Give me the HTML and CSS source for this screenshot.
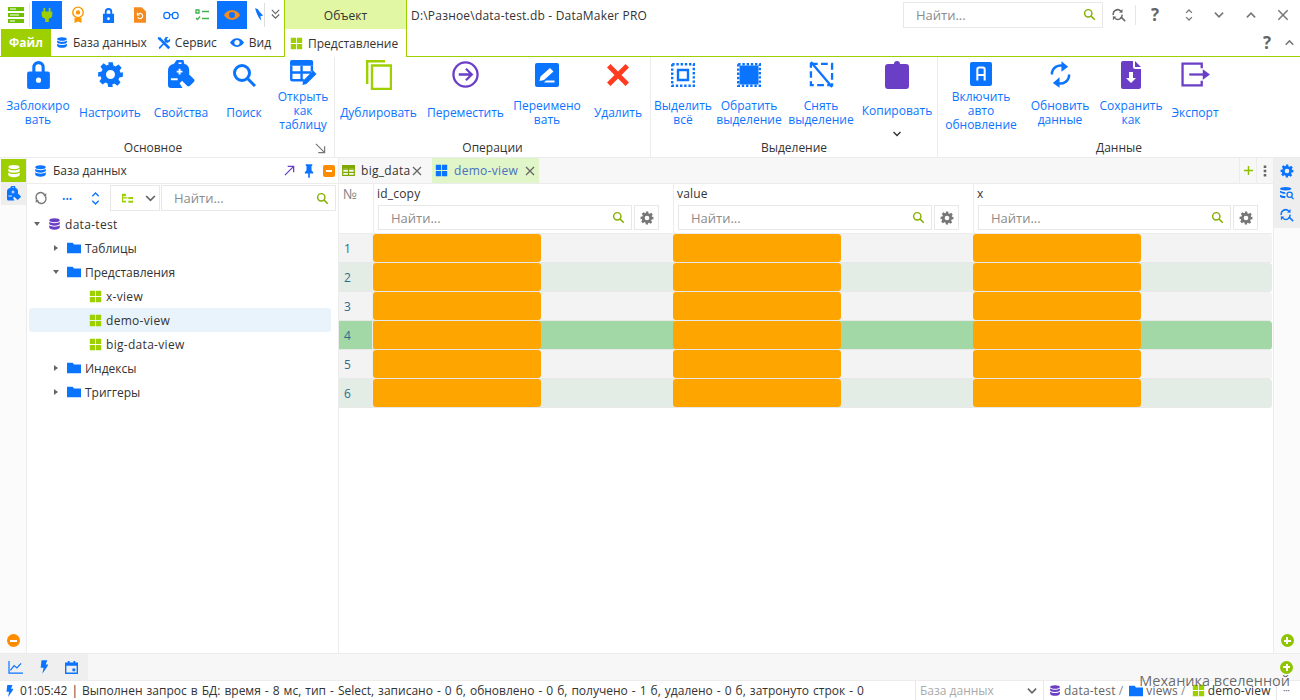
FILE: index.html
```html
<!DOCTYPE html>
<html lang="ru">
<head>
  <meta charset="UTF-8">
  <title>DataMaker PRO</title>
  <link rel="stylesheet" href="styles.css">
</head>
<body>
  <svg class="defs" width="0" height="0">
    <defs>
      <symbol id="db" viewBox="0 0 16 16"><path d="M8 1c3.600 0 6.500 1 6.500 2.400S11.600 5.800 8 5.800 1.500 4.800 1.500 3.400 4.400 1 8 1zM1.500 5.300C3 6.600 5.500 7 8 7s5-.4 6.500-1.700v2.400C14.500 9 11.600 10 8 10S1.500 9 1.500 7.700zM1.500 9.600C3 10.900 5.500 11.300 8 11.300s5-.4 6.500-1.700v2.600C14.500 13.700 11.600 15 8 15s-6.500-1.300-6.500-2.800z"/></symbol>
      <symbol id="grid4" viewBox="0 0 16 16"><path d="M1 1h6.500v6.500H1zM8.500 1H15v6.500H8.500zM1 8.500h6.500V15H1zM8.500 8.500H15V15H8.500z"/></symbol>
      <symbol id="folder" viewBox="0 0 16 16"><path d="M0 2h6.500L8 4h8v10H0z"/></symbol>
      <symbol id="find" viewBox="0 0 16 16"><circle cx="6.500" cy="6.500" r="4.500" fill="none" stroke="currentColor" stroke-width="1.800"/><path d="M10 10l4.500 4.500" stroke="currentColor" stroke-width="1.800" fill="none"/></symbol>
      <symbol id="gear" viewBox="0 0 24 24"><path fill-rule="evenodd" d="M10 1h4l.6 3.100 1.900.8 2.600-1.800 2.800 2.800-1.800 2.600.8 1.900L23 10v4l-3.100.6-.8 1.900 1.800 2.600-2.800 2.800-2.600-1.800-1.900.8L14 23h-4l-.6-3.100-1.900-.8-2.600 1.800-2.800-2.800 1.800-2.600-.8-1.900L1 14v-4l3.100-.6.800-1.900-1.800-2.600 2.800-2.800 2.600 1.800 1.900-.8zM12 8a4 4 0 1 0 0 8 4 4 0 0 0 0-8z"/></symbol>
      <symbol id="refresh" viewBox="0 0 16 16"><path d="M3 9.500A5.200 5.200 0 0 1 12 4.300M13 6.500A5.200 5.200 0 0 1 4 11.700" fill="none" stroke="currentColor" stroke-width="1.700"/><path d="M10.500 5.800L14 6.500V2.300zM5.500 10.200L2 9.500v4.200z"/></symbol>
      <symbol id="refind" viewBox="0 0 16 16"><path d="M1.500 8A5 5 0 0 1 10 3.500M11.500 7.500A5 5 0 0 1 3.500 12" fill="none" stroke="currentColor" stroke-width="1.700"/><path d="M8 5l4 .5V1zM5 10l-4-.5V14z"/><path d="M10 10l5 5" stroke="currentColor" stroke-width="1.700"/></symbol>
      <symbol id="updown" viewBox="0 0 12 16"><path d="M2.500 5.500L6 2l3.500 3.500M2.500 10.500L6 14l3.500-3.500" fill="none" stroke="currentColor" stroke-width="1.500"/></symbol>
      <symbol id="bolt" viewBox="0 0 12 16"><path d="M3 0h7L8 5h3l-1 2.500L4 16l1.500-7H2z"/></symbol>
      <symbol id="arrowdown" viewBox="0 0 12 12"><path d="M2.500 4l3.500 3.500L9.500 4" fill="none" stroke="currentColor" stroke-width="1.400"/></symbol>
      <symbol id="arrowup" viewBox="0 0 12 12"><path d="M2.500 8L6 4.500 9.500 8" fill="none" stroke="currentColor" stroke-width="1.400"/></symbol>
      <symbol id="cross" viewBox="0 0 12 12"><path d="M2 2l8 8M10 2l-8 8" fill="none" stroke="currentColor" stroke-width="1.300"/></symbol>
      <symbol id="tree" viewBox="0 0 16 14"><path d="M1 1h5v3H1zM1 4h1.500v6H6v2H1zM9 5h6v2.500H9zM9 10h6v2.500H9zM2.500 5.500H8V7H2.500z"/></symbol>
      <symbol id="bag" viewBox="0 0 28 30"><path d="M9 0h7l1 4c3.500.6 5 3.500 5 7v3.500L12 24l3 5H3a3 3 0 0 1-3-3V11c0-3.500 2-6.400 6-7zm2 2.500V4h3V2.500zM11 9v2H9v2h2v2h2v-2h2v-2h-2V9zM3 19v2h7v-2z"/><path d="M17 15l4-1 6 6a2 2 0 0 1 0 2.500l-4.500 4.500a2 2 0 0 1-2.500 0l-6-6 1-4z"/></symbol>
    </defs>
  </svg>

  <div class="app">
    <header class="top">
      <div class="top-left">
        <div class="qat">
          <svg class="qat-menu" viewBox="0 0 18 18" width="22" height="18"><path fill="#6fc000" d="M1 1h16v4H1zM1 7h16v4H1zM1 13h16v4H1z"/><path fill="#fff" d="M3 2.500h6v1H3zM3 8.500h9v1H3zM3 14.500h5v1H3z"/></svg>
          <span class="qat-sep"></span>
          <div class="qat-btn on"><svg viewBox="0 0 16 18" width="14" height="18"><path fill="#9ecf00" d="M4 1h2v4h4V1h2v4h2v4c0 2.500-2 4-4 4.300V17H6v-3.700C4 13 2 11.500 2 9V5h2z"/></svg></div>
          <div class="qat-btn"><svg viewBox="0 0 16 20" width="14" height="18"><circle cx="8" cy="7" r="6" fill="none" stroke="#ff9800" stroke-width="1.600"/><circle cx="8" cy="7" r="2.500" fill="#ff9800"/><path fill="#ff9800" d="M4 13h8v6l-4-1.500L4 19z"/></svg></div>
          <div class="qat-btn"><svg viewBox="0 0 14 18" width="13" height="17"><path fill="#0b74ff" fill-rule="evenodd" d="M3 7V5a4 4 0 0 1 8 0v2h2v10H1V7zm2 0h4V5a2 2 0 0 0-4 0zm2 4a1.500 1.500 0 1 0 0 3 1.500 1.500 0 0 0 0-3z"/></svg></div>
          <div class="qat-btn"><svg viewBox="0 0 14 18" width="12" height="16"><path fill="#f58a1f" d="M0 0h9l5 5v13H0z"/><path fill="none" stroke="#fff" stroke-width="1.300" d="M5 8a3 3 0 1 1-.6 3.500M4 6.500V9h2.500"/></svg></div>
          <div class="qat-btn"><svg viewBox="0 0 18 10" width="16" height="9"><rect x="1" y="1.500" width="6.500" height="7" rx="3" fill="none" stroke="#0b74ff" stroke-width="1.400"/><rect x="10.500" y="1.500" width="6.500" height="7" rx="3" fill="none" stroke="#0b74ff" stroke-width="1.400"/><path d="M7.500 4h3" stroke="#0b74ff" stroke-width="1.400"/></svg></div>
          <div class="qat-btn"><svg viewBox="0 0 14 12" width="14" height="12"><path fill="none" stroke="#3db34a" stroke-width="1.300" d="M1 1h3v3H1zM7 2.500h7M1 9l1.500 1.500L5 7.500M7 9.500h7"/></svg></div>
          <div class="qat-btn on"><svg viewBox="0 0 16 12" width="16" height="12"><path fill="#f58a1f" fill-rule="evenodd" d="M8 1c3.500 0 6.500 2.200 8 5-1.500 2.800-4.500 5-8 5S1.500 8.800 0 6c1.500-2.800 4.500-5 8-5zm0 2a3 3 0 1 0 0 6 3 3 0 0 0 0-6z"/></svg></div>
          <div class="qat-cut"><svg viewBox="0 0 10 16" width="9" height="15"><path fill="#0b74ff" d="M0 1l3 1 2 3 4 4-3 1 1 5-3-4-2-4z"/></svg></div>
          <div class="qat-more"><svg viewBox="0 0 12 14" width="11" height="13"><path d="M2 2l4 4 4-4M2 7l4 4 4-4" fill="none" stroke="#666" stroke-width="1.300"/></svg></div>
        </div>
        <nav class="menu">
          <span class="menu-file">Файл</span>
          <span class="menu-item menu-db"><svg class="ic-blue" width="12" height="13"><use href="#db"/></svg>База данных</span>
          <span class="menu-item menu-srv"><svg viewBox="0 0 16 16" width="14" height="14"><path d="M2.500 2.500L14 14" stroke="#0b74ff" stroke-width="3" fill="none"/><path fill="#0b74ff" d="M1 1l3 1 1 3-2 0-2-2zM2 13l7-7-1-2 2-3h3l-2 2.500 1.500 1.500L15 3v3l-3 2-2-1-7 8z"/></svg>Сервис</span>
          <span class="menu-item menu-view"><svg viewBox="0 0 16 12" width="14" height="11"><path fill="#0b74ff" fill-rule="evenodd" d="M8 1c3.500 0 6.500 2.200 8 5-1.500 2.800-4.500 5-8 5S1.500 8.800 0 6c1.500-2.800 4.500-5 8-5zm0 2a3 3 0 1 0 0 6 3 3 0 0 0 0-6z"/></svg>Вид</span>
        </nav>
      </div>
      <div class="ctx-tab">
        <div class="ctx-head">Объект</div>
        <div class="ctx-body"><svg class="ic-lime" width="13" height="13"><use href="#grid4"/></svg>Представление</div>
      </div>
      <div class="top-right">
        <div class="title-row">
          <div class="title">D:\Разное\data-test.db - DataMaker PRO</div>
          <div class="search search-top">
            <span>Найти...</span>
            <svg class="ic-find" width="13" height="13"><use href="#find"/></svg>
          </div>
          <div class="win-btns">
            <svg class="win-refind" width="14" height="14"><use href="#refind"/></svg>
            <span class="win-sep"></span>
            <span class="help">?</span>
            <svg class="win-i win-ud" width="10" height="14"><use href="#updown"/></svg>
            <svg class="win-i" width="14" height="14"><use href="#arrowdown"/></svg>
            <svg class="win-i" width="14" height="14"><use href="#arrowup"/></svg>
            <svg class="win-i" width="14" height="14"><use href="#cross"/></svg>
          </div>
        </div>
        <div class="help-row">
          <span class="help">?</span>
          <svg class="win-i" width="13" height="13"><use href="#arrowup"/></svg>
        </div>
      </div>
    </header>

    <section class="ribbon">
      <div class="group g1">
        <div class="btns">
          <div class="rb w72"><div class="rb-ic"><svg viewBox="0 0 22 28" width="23" height="29"><path fill="#0b74ff" fill-rule="evenodd" d="M5 11V7a6 6 0 0 1 12 0v4h3a2 2 0 0 1 2 2v13a2 2 0 0 1-2 2H2a2 2 0 0 1-2-2V13a2 2 0 0 1 2-2zm3 0h6V7a3 3 0 0 0-6 0zm3 6a2.500 2.500 0 1 0 0 5 2.500 2.500 0 0 0 0-5z"/></svg></div><div class="rb-tx">Заблокиро<br>вать</div></div>
          <div class="rb w72"><div class="rb-ic"><svg class="ic-blue" width="27" height="27"><use href="#gear"/></svg></div><div class="rb-tx">Настроить</div></div>
          <div class="rb w70"><div class="rb-ic"><svg class="ic-blue" width="27" height="29"><use href="#bag"/></svg></div><div class="rb-tx">Свойства</div></div>
          <div class="rb w56"><div class="rb-ic"><svg viewBox="0 0 24 24" width="24" height="24"><circle cx="10" cy="10" r="7.500" fill="none" stroke="#0b74ff" stroke-width="3"/><path d="M15.500 15.500L23 23" stroke="#0b74ff" stroke-width="3"/></svg></div><div class="rb-tx">Поиск</div></div>
          <div class="rb w62"><div class="rb-ic"><svg viewBox="0 0 28 28" width="27" height="27"><path fill="#0b74ff" d="M2 0h20a2 2 0 0 1 2 2v4H0V2a2 2 0 0 1 2-2z"/><path fill="none" stroke="#0b74ff" stroke-width="2.500" d="M1.300 6v14c0 .5.500 1 1 1h12M12 6v15M1 13h21M22.700 6v6"/><path fill="#0b74ff" d="M24 11l3.500 3.500L17 25l-4 1 .5-4.500z"/></svg></div><div class="rb-tx rb-3">Открыть<br>как<br>таблицу</div></div>
        </div>
        <div class="group-name gn1">Основное<svg class="launcher" viewBox="0 0 12 12" width="11" height="11"><path d="M1 1l9 9M3.500 10.500h7v-7" fill="none" stroke="#777" stroke-width="1.300"/></svg></div>
      </div>
      <div class="group g2">
        <div class="btns">
          <div class="rb w87"><div class="rb-ic"><svg viewBox="0 0 26 30" width="26" height="30"><path fill="none" stroke="#9ecf00" stroke-width="2.400" d="M6 5.500h19V29H6zM1.200 24V1.200H19"/></svg></div><div class="rb-tx">Дублировать</div></div>
          <div class="rb w87"><div class="rb-ic"><svg viewBox="0 0 28 28" width="27" height="27"><circle cx="14" cy="14" r="12.500" fill="none" stroke="#6a3fc6" stroke-width="2.400"/><path d="M7 14h13M14.500 8l6 6-6 6" fill="none" stroke="#6a3fc6" stroke-width="2.400"/></svg></div><div class="rb-tx">Переместить</div></div>
          <div class="rb w76"><div class="rb-ic"><svg viewBox="0 0 24 24" width="24" height="24"><rect width="24" height="24" rx="2" fill="#0b74ff"/><path fill="#fff" d="M15 5l3.500 3.500L9 17l-4.500 1 1-4.500zM11 17.500h8.500V19.500H9z"/></svg></div><div class="rb-tx">Переимено<br>вать</div></div>
          <div class="rb w66"><div class="rb-ic"><svg viewBox="0 0 22 22" width="22" height="22"><path fill="#ff3b20" d="M3.500 0L11 7.500 18.500 0 22 3.500 14.500 11 22 18.500 18.500 22 11 14.500 3.500 22 0 18.500 7.500 11 0 3.500z"/></svg></div><div class="rb-tx">Удалить</div></div>
        </div>
        <div class="group-name">Операции</div>
      </div>
      <div class="group g3">
        <div class="btns">
          <div class="rb w64"><div class="rb-ic"><svg viewBox="0 0 24 24" width="24" height="24"><path fill="none" stroke="#0b74ff" stroke-width="2.400" stroke-dasharray="2.400 1.800" d="M1.200 1.200h21.600v21.600H1.200z"/><path fill="none" stroke="#0b74ff" stroke-width="2.400" d="M7 7h10v10H7z"/></svg></div><div class="rb-tx">Выделить<br>всё</div></div>
          <div class="rb w68"><div class="rb-ic"><svg viewBox="0 0 24 24" width="24" height="24"><path fill="none" stroke="#0b74ff" stroke-width="2.400" stroke-dasharray="2.400 1.800" d="M1.200 1.200h21.600v21.600H1.200z"/><path fill="#0b74ff" d="M2.500 2.500h19v19h-19z"/></svg></div><div class="rb-tx">Обратить<br>выделение</div></div>
          <div class="rb w76"><div class="rb-ic"><svg viewBox="0 0 26 28" width="25" height="27"><path fill="none" stroke="#0b74ff" stroke-width="2.400" stroke-dasharray="7 3.500" d="M2 3h22v22H2z"/><path d="M2 1l22 26" stroke="#0b74ff" stroke-width="2.400"/></svg></div><div class="rb-tx">Снять<br>выделение</div></div>
          <div class="rb w76"><div class="rb-ic"><svg viewBox="0 0 24 28" width="24" height="28"><path fill="#6a3fc6" d="M3 3h6a3 3 0 0 1 6 0h6a3 3 0 0 1 3 3v19a3 3 0 0 1-3 3H3a3 3 0 0 1-3-3V6a3 3 0 0 1 3-3z"/></svg></div><div class="rb-tx rb-copy">Копировать<svg class="copy-arrow" width="12" height="12"><use href="#arrowdown"/></svg></div></div>
        </div>
        <div class="group-name">Выделение</div>
      </div>
      <div class="group g4">
        <div class="btns">
          <div class="rb w86"><div class="rb-ic"><svg viewBox="0 0 24 26" width="22" height="24"><rect width="24" height="26" rx="2" fill="#0b74ff"/><path fill="none" stroke="#fff" stroke-width="2.200" d="M8 20V8a2 2 0 0 1 2-2h4a2 2 0 0 1 2 2v12M8 14h8"/></svg></div><div class="rb-tx rb-3">Включить<br>авто<br>обновление</div></div>
          <div class="rb w72"><div class="rb-ic"><svg viewBox="0 0 22 30" width="21" height="29"><path d="M2 15A9 9 0 0 1 15 6.500M20 15A9 9 0 0 1 7 23.500" fill="none" stroke="#0b74ff" stroke-width="2.600"/><path fill="#0b74ff" d="M12 1v11l7-5zM10 18v11l-7-5z"/></svg></div><div class="rb-tx">Обновить<br>данные</div></div>
          <div class="rb w70"><div class="rb-ic"><svg viewBox="0 0 20 28" width="20" height="28"><path fill="#6a3fc6" d="M2 0h10v6a2 2 0 0 0 2 2h6v18a2 2 0 0 1-2 2H2a2 2 0 0 1-2-2V2a2 2 0 0 1 2-2zM14 0l6 6h-6z"/><path fill="#fff" d="M8 11h4v6h3l-5 5-5-5h3z"/></svg></div><div class="rb-tx">Сохранить<br>как</div></div>
          <div class="rb w58"><div class="rb-ic"><svg viewBox="0 0 28 24" width="29" height="25"><path fill="none" stroke="#6a3fc6" stroke-width="2.200" d="M20 6V1.500H1.500v21H20V18"/><path d="M8 12h17" stroke="#6a3fc6" stroke-width="2.200"/><path fill="#6a3fc6" d="M21 7l7 5-7 5z"/></svg></div><div class="rb-tx">Экспорт</div></div>
        </div>
        <div class="group-name">Данные</div>
      </div>
    </section>

    <main class="main">
      <aside class="rail">
        <div class="rail-on"><svg class="ic-white" width="14" height="14"><use href="#db"/></svg></div>
        <div class="rail-off"><svg class="ic-blue" width="14" height="15"><use href="#bag"/></svg></div>
        <div class="rail-end"><span class="round round-o"></span></div>
      </aside>
      <section class="side">
        <div class="side-head">
          <svg class="ic-blue" width="13" height="14"><use href="#db"/></svg>
          <span class="side-title">База данных</span>
          <svg viewBox="0 0 12 12" width="11" height="11"><path d="M1 11L10 2M4 1.500h6.500V8" fill="none" stroke="#6a3fc6" stroke-width="1.400"/></svg>
          <svg viewBox="0 0 12 16" width="10" height="14"><path fill="#0b74ff" d="M2 0h8v1.500L9 2v5l2 2.500V11H7v5H5v-5H1V9.500L3 7V2l-1-.5z"/></svg>
          <span class="min-btn"></span>
        </div>
        <div class="side-tools">
          <svg class="tool-refresh" width="14" height="14"><use href="#refresh"/></svg>
          <span class="tool-dots">•••</span>
          <svg class="ic-blue tool-ud" width="11" height="15"><use href="#updown"/></svg>
          <div class="combo"><svg class="ic-lime" width="13" height="11"><use href="#tree"/></svg><svg class="combo-arrow" width="15" height="15"><use href="#arrowdown"/></svg></div>
          <div class="search search-side"><span>Найти...</span><svg class="ic-find" width="13" height="13"><use href="#find"/></svg></div>
        </div>
        <ul class="tree">
          <li class="node l0 lat"><i class="tw open"></i><svg class="ic-purple" width="13" height="14"><use href="#db"/></svg>data-test</li>
          <li class="node l1"><i class="tw"></i><svg class="ic-blue" width="14" height="14"><use href="#folder"/></svg>Таблицы</li>
          <li class="node l1"><i class="tw open"></i><svg class="ic-blue" width="14" height="14"><use href="#folder"/></svg>Представления</li>
          <li class="node l2 lat"><svg class="ic-lime" width="13" height="13"><use href="#grid4"/></svg>x-view</li>
          <li class="node l2 lat sel"><svg class="ic-lime" width="13" height="13"><use href="#grid4"/></svg>demo-view</li>
          <li class="node l2 lat"><svg class="ic-lime" width="13" height="13"><use href="#grid4"/></svg>big-data-view</li>
          <li class="node l1"><i class="tw"></i><svg class="ic-blue" width="14" height="14"><use href="#folder"/></svg>Индексы</li>
          <li class="node l1"><i class="tw"></i><svg class="ic-blue" width="14" height="14"><use href="#folder"/></svg>Триггеры</li>
        </ul>
      </section>
      <section class="content">
        <div class="tabs">
          <div class="tab tab-a lat"><svg viewBox="0 0 14 12" width="13" height="11"><path fill="none" stroke="#7fa800" stroke-width="1.300" d="M.7.7h12.600v10.600H.7zM.7 4.500h12.600M.7 8h12.600M7 .7v10.600"/><path fill="#7fa800" d="M0 0h14v4H0z"/></svg>big_data<svg class="tab-x" width="12" height="12"><use href="#cross"/></svg></div>
          <div class="tab tab-b lat"><svg class="ic-blue" width="13" height="13"><use href="#grid4"/></svg>demo-view<svg class="tab-x" width="12" height="12"><use href="#cross"/></svg></div>
          <div class="tabs-end">
            <div class="tabs-btn"><svg viewBox="0 0 12 12" width="11" height="11"><path d="M6 1v10M1 6h10" stroke="#8fbf00" stroke-width="1.600"/></svg></div>
            <div class="tabs-btn"><svg viewBox="0 0 4 14" width="4" height="12"><path fill="#666" d="M.5.500h3v3h-3zM.5 5.500h3v3h-3zM.5 10.500h3v3h-3z"/></svg></div>
          </div>
        </div>
        <div class="grid">
          <div class="gh num-h">№</div>
          <div class="gh">
            <div class="gh-name">id_copy</div>
            <div class="gh-filter"><div class="search"><span>Найти...</span><svg class="ic-find" width="13" height="13"><use href="#find"/></svg></div><div class="gear-btn"><svg class="ic-gray" width="14" height="14"><use href="#gear"/></svg></div></div>
          </div>
          <div class="gh">
            <div class="gh-name">value</div>
            <div class="gh-filter"><div class="search"><span>Найти...</span><svg class="ic-find" width="13" height="13"><use href="#find"/></svg></div><div class="gear-btn"><svg class="ic-gray" width="14" height="14"><use href="#gear"/></svg></div></div>
          </div>
          <div class="gh">
            <div class="gh-name">x</div>
            <div class="gh-filter"><div class="search"><span>Найти...</span><svg class="ic-find" width="13" height="13"><use href="#find"/></svg></div><div class="gear-btn"><svg class="ic-gray" width="14" height="14"><use href="#gear"/></svg></div></div>
          </div>

          <div class="num">1</div><div class="cell"><b></b></div><div class="cell"><b></b></div><div class="cell last"><b></b></div>
          <div class="num even">2</div><div class="cell even"><b></b></div><div class="cell even"><b></b></div><div class="cell even last"><b></b></div>
          <div class="num">3</div><div class="cell"><b></b></div><div class="cell"><b></b></div><div class="cell last"><b></b></div>
          <div class="num cur">4</div><div class="cell cur"><b></b></div><div class="cell cur"><b></b></div><div class="cell cur last"><b></b></div>
          <div class="num">5</div><div class="cell"><b></b></div><div class="cell"><b></b></div><div class="cell last"><b></b></div>
          <div class="num even">6</div><div class="cell even"><b></b></div><div class="cell even"><b></b></div><div class="cell even last"><b></b></div>
        </div>
      </section>
      <aside class="rail-r">
        <div class="rail-r-top">
          <svg class="ic-blue" width="14" height="14"><use href="#gear"/></svg>
          <svg viewBox="0 0 16 16" width="14" height="14"><path fill="#0b74ff" d="M6.500 1C10 1 13 1.800 13 3s-3 2-6.500 2S0 4.200 0 3s3-2 6.500-2zM0 5.500C1.500 6.500 4 7 6 7v2c-2 0-4.500-.5-6-1.500zM0 10c1.500 1 4 1.500 6 1.500V14c-3 0-6-1-6-2z"/><circle cx="11" cy="10" r="3" fill="none" stroke="#0b74ff" stroke-width="1.500"/><path d="M13 12.500l2.500 2.500" stroke="#0b74ff" stroke-width="1.500"/></svg>
          <svg class="ic-blue" width="14" height="14"><use href="#refind"/></svg>
        </div>
        <div class="rail-r-end"><span class="round round-g"></span></div>
      </aside>
    </main>

    <div class="bottom-bar">
      <div class="bottom-tabs">
        <svg viewBox="0 0 16 14" width="15" height="13"><path d="M1 0v13h15M2.500 10l4-5 3 2.500L14 2.500" fill="none" stroke="#0b74ff" stroke-width="1.300"/></svg>
        <svg class="ic-blue" width="10" height="14"><use href="#bolt"/></svg>
        <svg viewBox="0 0 14 14" width="13" height="13"><path fill="#0b74ff" fill-rule="evenodd" d="M3 0h2v1.500h4V0h2v1.500h3V14H0V1.500h3zM1.500 5v7.500h11V5zM8 8h3v3H8z"/></svg>
      </div>
      <span class="round round-g"></span>
    </div>

    <footer class="status">
      <svg class="ic-blue st-bolt" width="9" height="14"><use href="#bolt"/></svg>
      <span class="st-msg">01:05:42 | Выполнен запрос в БД: время - 8 мс, тип - Select, записано - 0 б, обновлено - 0 б, получено - 1 б, удалено - 0 б, затронуто строк - 0</span>
      <div class="st-combo"><span>База данных</span><svg class="combo-arrow" width="14" height="14"><use href="#arrowdown"/></svg></div>
      <div class="crumbs">
        <svg class="ic-purple" width="12" height="13"><use href="#db"/></svg><span class="cr-g">data-test</span><span class="cr-s">/</span>
        <svg class="ic-blue" width="14" height="14"><use href="#folder"/></svg><span class="cr-g">views</span><span class="cr-s">/</span>
        <svg class="ic-lime" width="13" height="13"><use href="#grid4"/></svg><span class="cr-d">demo-view</span>
      </div>
      <span class="st-dots">•••</span>
    </footer>

    <div class="watermark">Механика вселенной</div>
  </div>
</body>
</html>
```

FILE: styles.css
```css
html, body {
  margin: 0;
  padding: 0;
  background: #fff;
  overflow: hidden;
}
.defs {
  position: absolute;
}
.app {
  position: relative;
  width: 1300px;
  height: 700px;
  display: flex;
  flex-direction: column;
  font-family: "Open Sans", "Noto Sans", sans-serif;
  font-size: 12px;
  color: #333;
}
svg {
  flex: none;
  fill: currentColor;
}
.lat { letter-spacing: 0.3px; }
.ic-blue { color: #0b74ff; }
.ic-lime { color: #9ecf00; }
.ic-purple { color: #6a3fc6; }
.ic-white { color: #fff; }
.ic-gray { color: #777; }
.ic-find { color: #86b000; }

/* titlebar */
.top {
  display: flex;
  height: 57px;
  flex: none;
}
.top-left {
  width: 285px;
  box-sizing: border-box;
  border-right: 1px solid #9ecf00;
  border-bottom: 1px solid #9ecf00;
  display: flex;
  flex-direction: column;
}
.qat {
  height: 29px;
  display: flex;
  align-items: center;
}
.qat-menu {
  margin-left: 5px;
}
.qat-sep {
  width: 1px;
  height: 24px;
  background: #e6e6e6;
  margin: 0 2px;
}
.qat-btn {
  width: 31px;
  height: 28px;
  margin-top: 1px;
  display: flex;
  align-items: center;
  justify-content: center;
}
.qat-btn.on {
  width: 30px;
  background: #0b74ff;
}
.qat-cut {
  width: 9px;
  margin-left: 8px;
  border-right: 1px solid #ddd;
  height: 24px;
  display: flex;
  align-items: center;
}
.qat-more {
  margin-left: 5px;
  display: flex;
}
.menu {
  flex: 1;
  display: flex;
  align-items: center;
}
.menu-file {
  margin-left: 1px;
  width: 50px;
  height: 100%;
  background: #9ecf00;
  color: #fff;
  font-weight: 700;
  display: flex;
  align-items: center;
  justify-content: center;
}
.menu-item {
  display: flex;
  align-items: center;
}
.menu-db { margin-left: 5px; gap: 5px; }
.menu-srv { margin-left: 10px; gap: 4px; }
.menu-view { margin-left: 13px; gap: 5px; }
.ctx-tab {
  width: 122px;
  box-sizing: border-box;
  border-right: 1px solid #9ecf00;
  display: flex;
  flex-direction: column;
}
.ctx-head {
  height: 29px;
  background: #e2f7a4;
  padding-top: 1px;
  box-sizing: border-box;
  display: flex;
  align-items: center;
  justify-content: center;
}
.ctx-body {
  flex: 1;
  display: flex;
  align-items: center;
  gap: 5px;
  padding-left: 5px;
}
.top-right {
  flex: 1;
  border-bottom: 1px solid #9ecf00;
  display: flex;
  flex-direction: column;
}
.title-row {
  height: 29px;
  display: flex;
  align-items: center;
  padding-left: 4px;
}
.title {
  flex: 1;
  letter-spacing: 0.2px;
  padding-top: 1px;
}
.search {
  flex: 1;
  box-sizing: border-box;
  height: 25px;
  border: 1px solid #e8e8e8;
  background: #fff;
  display: flex;
  align-items: center;
  justify-content: space-between;
  padding: 0 6px 0 12px;
  color: #8b8b8b;
  font-size: 13px;
}
.search-top {
  flex: none;
  width: 200px;
  height: 26px;
}
.win-btns {
  width: 197px;
  display: flex;
  align-items: center;
  box-sizing: border-box;
  padding-left: 9px;
}
.win-refind { color: #666; }
.win-sep {
  width: 1px;
  height: 20px;
  background: #e6e6e6;
  margin: 0 15px 0 9px;
}
.help {
  font-size: 17px;
  font-weight: 700;
  color: #666;
  line-height: 1;
  width: 12px;
}
.win-i {
  color: #777;
  margin-left: 18px;
}
.win-ud { margin-left: 21px; }
.help-row {
  flex: 1;
  display: flex;
  align-items: center;
  justify-content: flex-end;
  padding-right: 4px;
}
.help-row .win-i {
  margin-left: 8px;
}

/* ribbon */
.ribbon {
  height: 101px;
  flex: none;
  display: flex;
  border-bottom: 1px solid #ececec;
  box-sizing: border-box;
}
.group {
  display: flex;
  flex-direction: column;
  border-right: 1px solid #ececec;
  box-sizing: border-box;
}
.g1 { width: 335px; padding-left: 2px; }
.g2 { width: 316px; }
.g3 { width: 287px; }
.g4 { flex: 1; border-right: 0; }
.btns {
  display: flex;
  height: 82px;
}
.rb {
  display: flex;
  flex-direction: column;
  align-items: center;
  color: #0b74ff;
  line-height: 14px;
  text-align: center;
  flex: none;
}
.w56 { width: 56px; }
.w58 { width: 58px; }
.w62 { width: 62px; }
.w64 { width: 64px; }
.w66 { width: 66px; }
.w68 { width: 68px; }
.w70 { width: 70px; }
.w72 { width: 72px; }
.w76 { width: 76px; }
.w86 { width: 86px; }
.w87 { width: 87px; }
.rb-ic {
  height: 35px;
  display: flex;
  align-items: center;
  justify-content: center;
}
.rb-tx {
  flex: 1;
  display: grid;
  align-content: center;
  white-space: nowrap;
  padding-bottom: 5px;
}
.rb-3 { padding-bottom: 7px; }
.rb-copy {
  position: relative;
  padding-bottom: 10px;
  justify-items: center;
}
.copy-arrow {
  color: #333;
  position: absolute;
  top: 36px;
  left: 29px;
}
.group-name {
  position: relative;
  text-align: center;
  line-height: 18px;
}
.gn1 { padding-right: 30px; }
.launcher {
  position: absolute;
  right: 8px;
  top: 4px;
}

/* main area */
.main {
  flex: 1;
  min-height: 0;
  display: flex;
}
.rail {
  width: 27px;
  flex: none;
  box-sizing: border-box;
  border-right: 1px solid #ececec;
  padding: 1px 0 0 1px;
  display: flex;
  flex-direction: column;
  background: #fbfbfb;
}
.rail-on, .rail-off {
  height: 23px;
  display: flex;
  align-items: center;
  justify-content: center;
}
.rail-on { background: #9ecf00; }
.rail-off { background: #eee; }
.rail-end {
  flex: 1;
  display: flex;
  align-items: flex-end;
  justify-content: center;
  padding-bottom: 6px;
}
.round {
  width: 13px;
  height: 13px;
  border-radius: 50%;
  position: relative;
  display: block;
  flex: none;
}
.round-o { background: #ff8c00; }
.round-g { background: #8fc400; }
.round::before {
  content: "";
  position: absolute;
  left: 3px;
  right: 3px;
  top: 5.5px;
  height: 2px;
  background: #fff;
}
.round-g::after {
  content: "";
  position: absolute;
  top: 3px;
  bottom: 3px;
  left: 5.5px;
  width: 2px;
  background: #fff;
}
.side {
  width: 312px;
  flex: none;
  box-sizing: border-box;
  border-right: 1px solid #ececec;
  display: flex;
  flex-direction: column;
}
.side-head {
  height: 26px;
  box-sizing: border-box;
  border-bottom: 1px solid #ececec;
  display: flex;
  align-items: center;
  gap: 9px;
  padding: 0 3px 0 7px;
}
.side-title {
  flex: 1;
  margin-left: -3px;
}
.min-btn {
  width: 12px;
  height: 12px;
  border-radius: 2px;
  background: #ff8c00;
  position: relative;
}
.min-btn::before {
  content: "";
  position: absolute;
  left: 3px;
  right: 3px;
  top: 5px;
  height: 2px;
  background: #fff;
}
.side-tools {
  height: 28px;
  display: flex;
  align-items: center;
  padding: 0 2px 0 7px;
}
.tool-refresh { color: #777; }
.tool-dots {
  color: #0b74ff;
  font-size: 9px;
  margin-left: 14px;
  width: 11px;
  white-space: nowrap;
}
.tool-ud { margin-left: 17px; }
.combo {
  width: 50px;
  margin-left: 9px;
  height: 26px;
  box-sizing: border-box;
  border: 1px solid #e8e8e8;
  display: flex;
  align-items: center;
  padding-left: 10px;
  gap: 9px;
}
.combo-arrow { color: #666; }
.search-side {
  margin-left: 1px;
  height: 26px;
}
.tree {
  list-style: none;
  margin: 0;
  padding: 0 0 0 2px;
}
.node {
  height: 24px;
  display: flex;
  align-items: center;
  gap: 4px;
}
.l0 { padding-left: 5px; gap: 4px; }
.l1 { padding-left: 25px; }
.l1 .tw { margin-right: 5px; }
.l2 { padding-left: 60px; gap: 4px; width: 242px; border-radius: 3px; }
.sel { background: #e8f3fc; }
.tw {
  width: 0;
  height: 0;
  border-left: 4px solid #666;
  border-top: 3.5px solid transparent;
  border-bottom: 3.5px solid transparent;
  margin-right: 4px;
}
.l1 .tw.open {
  border-left: 3.5px solid transparent;
  border-right: 3.5px solid transparent;
  border-top: 4px solid #666;
  border-bottom: 0;
  margin-right: 4px;
  margin-left: -1px;
}
.l0 .tw.open {
  border-left: 3.5px solid transparent;
  border-right: 3.5px solid transparent;
  border-top: 4px solid #666;
  border-bottom: 0;
  margin-right: 4px;
}

/* content */
.content {
  width: 934px;
  flex: none;
  display: flex;
  flex-direction: column;
}
.tabs {
  height: 26px;
  box-sizing: border-box;
  background: #f7f7f7;
  border-bottom: 1px solid #ececec;
  display: flex;
}
.tab {
  display: flex;
  align-items: center;
  gap: 6px;
  padding-left: 3px;
  box-sizing: border-box;
}
.tab-a { width: 93px; }
.tab-a .tab-x { margin-left: -6px; }
.tab-b { width: 107px; background: #e0f5c8; color: #4a6fc0; }
.tab-x { color: #666; }
.tabs-end {
  margin-left: auto;
  display: flex;
}
.tabs-btn {
  width: 17px;
  box-sizing: border-box;
  border-left: 1px solid #ececec;
  display: flex;
  align-items: center;
  justify-content: center;
}
.grid {
  display: grid;
  grid-template-columns: 34px 300px 300px 299px;
  grid-template-rows: 50px repeat(6, 29px);
}
.gh {
  box-sizing: border-box;
  border-bottom: 1px solid #ececec;
  border-left: 1px solid #ececec;
  padding-left: 3px;
}
.num-h {
  color: #888;
  font-size: 14px;
  border-left: 0;
  padding: 0 0 0 4px;
}
.gh-name {
  line-height: 18px;
  padding-top: 1px;
  letter-spacing: 0.2px;
}
.gh-filter {
  display: flex;
  gap: 2px;
  margin-top: 2px;
  padding-right: 14px;
}
.gh-filter .search {
  margin-left: 1px;
}
.gear-btn {
  width: 25px;
  height: 25px;
  box-sizing: border-box;
  border: 1px solid #e8e8e8;
  display: flex;
  align-items: center;
  justify-content: center;
}
.num, .cell {
  box-sizing: border-box;
  border-bottom: 1px solid #e8e8e8;
  background: #f3f3f3;
}
.num {
  padding-left: 5px;
  display: flex;
  align-items: center;
  color: #2d6c8c;
  border-right: 1px solid #ececec;
}
.even { background: #e3ede6; }
.cur { background: #a2d8a6; }
.last { border-radius: 0 3px 3px 0; }
.cell b {
  display: block;
  width: 168px;
  height: 28px;
  background: #ffa500;
  border-radius: 3px;
}
.rail-r {
  flex: 1;
  box-sizing: border-box;
  border-left: 1px solid #ececec;
  display: flex;
  flex-direction: column;
  background: #fbfbfb;
}
.rail-r-top {
  height: 70px;
  background: #eee;
  display: flex;
  flex-direction: column;
  align-items: center;
  justify-content: space-around;
  padding: 2px 0;
  box-sizing: border-box;
}
.rail-r-end {
  flex: 1;
  display: flex;
  align-items: flex-end;
  justify-content: center;
  padding-bottom: 6px;
}

/* bottom */
.bottom-bar {
  height: 27px;
  flex: none;
  background: #f7f7f7;
  border-top: 1px solid #ececec;
  box-sizing: border-box;
  display: flex;
  align-items: center;
  justify-content: space-between;
  padding-right: 7px;
}
.bottom-tabs {
  width: 88px;
  height: 100%;
  background: #efefef;
  display: flex;
  align-items: center;
  gap: 16px;
  padding-left: 8px;
  box-sizing: border-box;
}
.status {
  height: 20px;
  flex: none;
  display: flex;
  align-items: center;
  box-sizing: border-box;
  border-top: 1px solid #ececec;
}
.st-bolt { margin-left: 5px; }
.st-msg {
  margin-left: 6px;
  flex: 1;
  white-space: nowrap;
  word-spacing: 0.9px;
}
.st-combo {
  width: 129px;
  height: 100%;
  box-sizing: border-box;
  border-left: 1px solid #e8e8e8;
  border-right: 1px solid #e8e8e8;
  display: flex;
  align-items: center;
  justify-content: space-between;
  padding: 0 4px;
  color: #aaa;
}
.crumbs {
  display: flex;
  align-items: center;
  gap: 3px;
  padding-left: 5px;
  width: 232px;
  box-sizing: border-box;
  white-space: nowrap;
  letter-spacing: 0.2px;
}
.cr-g { color: #666; }
.cr-s { color: #888; margin-right: 3px; }
.cr-d { color: #333; }
.st-dots {
  font-size: 6px;
  color: #666;
  width: 24px;
  box-sizing: border-box;
  padding-left: 6px;
  border-left: 1px solid #e8e8e8;
  height: 100%;
  display: flex;
  align-items: center;
}
.watermark {
  position: absolute;
  right: 10px;
  top: 672px;
  font-size: 14.5px;
  line-height: 18px;
  color: rgba(80, 80, 80, 0.85);
}
```
